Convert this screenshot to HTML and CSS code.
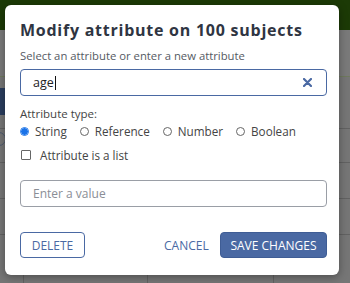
FILE: index.html
```html
<!DOCTYPE html>
<html lang="en">
<head>
    <meta charset="UTF-8">
    <title>Modify attribute</title>
    <link rel="stylesheet" href="styles.css">
</head>
<body>
    <!-- Page behind the dialog -->
    <div class="backdrop">
        <div class="topbar"></div>
        <div class="toolbar"></div>
        <div class="side-button"></div>
        <div class="side-circle"></div>
        <div class="row row1"></div>
        <div class="row row2"></div>
        <div class="row row3"></div>
        <div class="row row4"></div>
        <div class="col col1"></div>
        <div class="col col2"></div>
        <div class="col col3"></div>
    </div>

    <!-- Dialog -->
    <div class="modal">
        <h2 class="title">Modify attribute on 100 subjects</h2>
        <label class="hint">Select an attribute or enter a new attribute</label>
        <div class="field field-active">
            <span class="value">age<span class="caret"></span></span>
            <span class="clear">
                <svg width="9" height="9" viewBox="0 0 9 9">
                    <path d="M1 1 L8 8 M8 1 L1 8" stroke="#4a69a3" stroke-width="2.2" stroke-linecap="round"/>
                </svg>
            </span>
        </div>

        <div class="type-label">Attribute type:</div>
        <div class="radios">
            <label class="radio"><span class="dot checked"></span>String</label>
            <label class="radio"><span class="dot"></span>Reference</label>
            <label class="radio"><span class="dot"></span>Number</label>
            <label class="radio"><span class="dot"></span>Boolean</label>
        </div>
        <label class="check"><span class="box"></span>Attribute is a list</label>

        <div class="field field-plain">
            <span class="placeholder">Enter a value</span>
        </div>

        <div class="actions">
            <button class="btn btn-outline">DELETE</button>
            <div class="right">
                <button class="btn btn-text">CANCEL</button>
                <button class="btn btn-primary">SAVE CHANGES</button>
            </div>
        </div>
    </div>
</body>
</html>
```

FILE: styles.css
```css
body {
    margin: 0;
    width: 350px;
    height: 283px;
    overflow: hidden;
    position: relative;
    font-family: "Open Sans", "Noto Sans", sans-serif;
    background-color: #767676;
}
.backdrop {
    position: absolute;
    inset: 0;
}
.topbar {
    height: 30px;
    background-color: #1c3a06;
}
.toolbar {
    height: 46px;
    background-color: #7a7a7a;
    border-bottom: 1px solid #6f7a5e;
}
.side-button {
    position: absolute;
    left: 0;
    top: 88px;
    width: 8px;
    height: 27px;
    background-color: #2a3d5e;
}
.side-circle {
    position: absolute;
    left: -8px;
    top: 132px;
    width: 12px;
    height: 12px;
    border: 1px solid #4d5a70;
    border-radius: 50%;
}
.row {
    position: absolute;
    left: 0;
    right: 0;
    height: 1px;
    background-color: #626262;
}
.row1 { top: 128px; }
.row2 { top: 162px; }
.row3 { top: 198px; }
.row4 { top: 234px; }
.col {
    position: absolute;
    top: 265px;
    bottom: 0;
    width: 1px;
    background-color: #626262;
}
.col1 { left: 23px; }
.col2 { left: 147px; }
.col3 { left: 273px; }

.modal {
    position: absolute;
    left: 5px;
    top: 5px;
    width: 334px;
    height: 270px;
    box-sizing: border-box;
    padding: 15px 12px 0 15px;
    background-color: #fff;
    border-radius: 6px;
    box-shadow: 0 2px 8px rgba(0, 0, 0, 0.35);
    color: #3a3f4a;
}
.title {
    margin: 0;
    font-size: 16px;
    font-weight: 700;
    letter-spacing: 0.75px;
    color: #2f3542;
    line-height: 20px;
}
.hint {
    display: block;
    margin-top: 8px;
    font-size: 11.3px;
    color: #555a63;
    line-height: 16px;
}
.field {
    display: flex;
    align-items: center;
    justify-content: space-between;
    height: 27px;
    box-sizing: border-box;
    padding: 0 12px;
    border-radius: 4px;
    font-size: 12.5px;
}
.field-active {
    margin-top: 5px;
    border: 1px solid #4a69a3;
}
.value {
    color: #222;
    display: flex;
    align-items: center;
}
.caret {
    display: inline-block;
    width: 1px;
    height: 14px;
    background-color: #111;
    margin-left: 1px;
}
.clear {
    display: flex;
    margin-right: 2px;
}
.type-label {
    margin-top: 10px;
    font-size: 11.5px;
    line-height: 16px;
    color: #444;
}
.radios {
    display: flex;
    gap: 13px;
    margin-top: 1px;
    font-size: 11.7px;
    color: #444;
    line-height: 16px;
}
.radio {
    display: flex;
    align-items: center;
    gap: 6px;
}
.dot {
    width: 9px;
    height: 9px;
    border: 1px solid #666;
    border-radius: 50%;
    box-sizing: border-box;
}
.dot.checked {
    border: 1px solid #1a73e8;
    background: radial-gradient(circle, #1a73e8 0 3px, #fff 3.5px);
}
.check {
    display: flex;
    align-items: center;
    gap: 9px;
    margin-top: 8px;
    font-size: 11.7px;
    line-height: 16px;
    color: #444;
}
.box {
    width: 10px;
    height: 10px;
    border: 1px solid #666;
    border-radius: 1px;
    box-sizing: border-box;
    margin-left: 1px;
}
.field-plain {
    margin-top: 17px;
    border: 1px solid #9a9ea6;
}
.placeholder {
    color: #8a8e96;
    font-size: 12px;
}
.actions {
    display: flex;
    justify-content: space-between;
    align-items: center;
    margin-top: 25px;
}
.right {
    display: flex;
    align-items: center;
    gap: 12px;
}
.btn {
    font-family: inherit;
    font-size: 12px;
    height: 26px;
    border-radius: 4px;
    padding: 0 12px;
    cursor: pointer;
    color: #4a69a3;
    background: none;
    border: 1px solid transparent;
}
.btn-outline {
    border-color: #4a69a3;
    width: 65px;
    padding: 0;
}
.btn-text {
    padding: 0;
    width: 45px;
}
.btn-primary {
    background-color: #4a69a3;
    border-color: #3f5d95;
    color: #fff;
    width: 107px;
    padding: 0;
}
```
